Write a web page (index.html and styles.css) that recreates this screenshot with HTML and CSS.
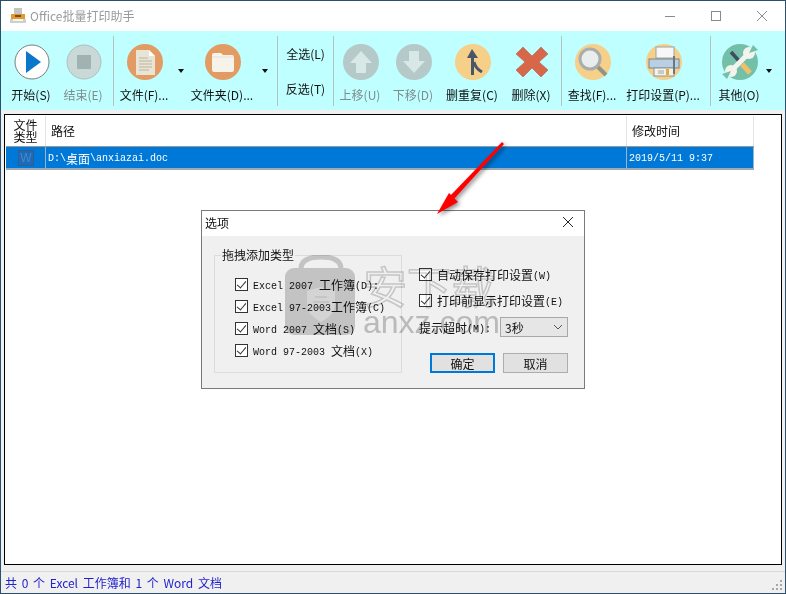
FILE: index.html
```html
<!DOCTYPE html>
<html lang="zh-CN">
<head>
    <meta charset="UTF-8">
    <title>Office批量打印助手</title>
    <link rel="stylesheet" href="styles.css">
</head>
<body>
<div class="window">

    <!-- Title bar -->
    <header class="titlebar">
        <svg class="app-icon" width="16" height="16" viewBox="0 0 16 16">
            <rect x="4" y="0" width="8" height="6" fill="#c4c4c4"/>
            <rect x="1" y="6" width="14" height="5" fill="#e09a2e"/>
            <rect x="5" y="7" width="6" height="2" fill="#7a4a1a"/>
            <rect x="0" y="11" width="16" height="4" fill="#cfcfcf"/>
            <rect x="3" y="11" width="10" height="2" fill="#f4f4f4"/>
        </svg>
        <span class="app-title">Office批量打印助手</span>
        <div class="win-controls">
            <svg width="12" height="12" viewBox="0 0 12 12"><path d="M1 6.5h10" stroke="#8a8a8a" fill="none"/></svg>
            <svg width="12" height="12" viewBox="0 0 12 12"><rect x="1.5" y="1.5" width="9" height="9" stroke="#8a8a8a" fill="none"/></svg>
            <svg width="12" height="12" viewBox="0 0 12 12"><path d="M1 1l10 10M11 1L1 11" stroke="#8a8a8a" fill="none"/></svg>
        </div>
    </header>

    <!-- Toolbar -->
    <div class="toolbar">
        <div class="group g-run">
            <div class="tool w-48">
                <svg class="icon" viewBox="0 0 36 36"><circle cx="18" cy="18" r="17" fill="#fff" stroke="#7c7c7c"/><path d="M12 7l15 11-15 11z" fill="#0a76cc"/></svg>
                <span>开始(S)</span>
            </div>
            <div class="tool w-56 off">
                <svg class="icon" viewBox="0 0 36 36"><circle cx="18" cy="18" r="17" fill="#c9d9d8" stroke="#b0bebd"/><rect x="11" y="11" width="14" height="14" fill="#a0b2b1"/></svg>
                <span>结束(E)</span>
            </div>
        </div>
        <div class="group g-files">
            <div class="tool w-62">
                <svg class="icon" viewBox="0 0 36 36"><circle cx="18" cy="18" r="18" fill="#e29c63"/><path d="M9 6h13l6 6v19H9z" fill="#e8e5d6"/><path d="M22 6l6 6h-6z" fill="#fff"/><path d="M12 14h9M12 17h13M12 20h13M12 23h13M12 26h10" stroke="#b9b59f"/></svg>
                <span>文件(F)...</span>
            </div>
            <i class="caret c-file"></i>
            <div class="tool w-72">
                <svg class="icon" viewBox="0 0 36 36"><circle cx="18" cy="18" r="18" fill="#e29c63"/><path d="M7 11q0-2 2-2h7l2 2h9q2 0 2 2v13q0 2-2 2H9q-2 0-2-2z" fill="#f6f3ea"/><path d="M7 13h22" stroke="#e6e0cf"/></svg>
                <span>文件夹(D)...</span>
            </div>
            <i class="caret c-folder"></i>
        </div>
        <div class="group g-select">
            <span>全选(L)</span>
            <span>反选(T)</span>
        </div>
        <div class="group g-edit">
            <div class="tool w-54 off">
                <svg class="icon" viewBox="0 0 36 36"><circle cx="18" cy="18" r="18" fill="#b5c9c8"/><path d="M18 7l11 12h-6v10H13V19H7z" fill="#d7e8e6"/></svg>
                <span>上移(U)</span>
            </div>
            <div class="tool w-52 off">
                <svg class="icon" viewBox="0 0 36 36"><circle cx="18" cy="18" r="18" fill="#b5c9c8"/><path d="M18 29L7 17h6V7h10v10h6z" fill="#d7e8e6"/></svg>
                <span>下移(D)</span>
            </div>
            <div class="tool w-66">
                <svg class="icon" viewBox="0 0 36 36"><circle cx="18" cy="18" r="18" fill="#f6cf88"/><path d="M17 5l6 9h-4v17h-3V14h-4z" fill="#47566c"/><path d="M19 18q1 6 8 10" stroke="#47566c" stroke-width="3" fill="none"/></svg>
                <span>删重复(C)</span>
            </div>
            <div class="tool w-52">
                <svg class="icon" viewBox="0 0 36 36"><path d="M9 3l9 9 9-9 7 7-9 8 9 8-7 7-9-9-9 9-7-7 9-8-9-8z" fill="#d8674a" stroke="#a9553f" stroke-width="0.5"/></svg>
                <span>删除(X)</span>
            </div>
        </div>
        <div class="group g-find">
            <div class="tool w-62">
                <svg class="icon" viewBox="0 0 36 36"><circle cx="18" cy="18" r="18" fill="#f6cf88"/><circle cx="15" cy="15" r="10" fill="#e9edee" stroke="#a9adab" stroke-width="3"/><path d="M23 23l8 8" stroke="#8f9488" stroke-width="4"/></svg>
                <span>查找(F)...</span>
            </div>
            <div class="tool w-80">
                <svg class="icon" viewBox="0 0 36 36">
                    <circle cx="18" cy="18" r="18" fill="#f6cf88"/>
                    <rect x="10" y="3" width="18" height="11" fill="#f7f7f7" stroke="#9aa4ac"/>
                    <rect x="3" y="15" width="30" height="9" fill="#b9cfe4" stroke="#79848c"/>
                    <rect x="8" y="24" width="20" height="8" fill="#f4f1e6" stroke="#8a96a0"/>
                    <path d="M12 27h6M12 29h6" stroke="#9aa4ac"/>
                    <rect x="20" y="25" width="3" height="6" fill="#e6a93c"/>
                    <path d="M28 12v18" stroke="#6b7780" stroke-width="2"/>
                </svg>
                <span>打印设置(P)...</span>
            </div>
        </div>
        <div class="group g-other">
            <div class="tool w-52">
                <svg class="icon" viewBox="0 0 36 36">
                    <circle cx="18" cy="18" r="18" fill="#74bfa8"/>
                    <path d="M20 20l8 9" stroke="#f0c069" stroke-width="5"/>
                    <path d="M9 8l9 10" stroke="#3f4d5c" stroke-width="3.500"/>
                    <path d="M9 27l18-18" stroke="#f4f4ee" stroke-width="5"/>
                    <circle cx="27" cy="9" r="6" fill="#f4f4ee"/>
                    <circle cx="9" cy="27" r="6" fill="#f4f4ee"/>
                    <path d="M27 9l4-8 5 5z" fill="#74bfa8"/>
                    <path d="M9 27l-4 8-5-5z" fill="#74bfa8"/>
                </svg>
                <span>其他(O)</span>
            </div>
            <i class="caret c-other"></i>
        </div>
    </div>

    <!-- File list -->
    <div class="content">
        <div class="list">
            <div class="list-row list-head">
                <div class="cell cell-type">文件<br>类型</div>
                <div class="cell cell-path">路径</div>
                <div class="cell cell-time">修改时间</div>
            </div>
            <div class="list-row list-sel">
                <div class="cell cell-type">
                    <svg width="16" height="16" viewBox="0 0 16 16"><rect x="0.500" y="0.500" width="15" height="15" fill="#1f6ab4" stroke="#2a5f98"/><text x="8" y="12" class="word-w">W</text></svg>
                </div>
                <div class="cell cell-path"><span class="en">D:\</span>桌面<span class="en">\anxiazai.doc</span></div>
                <div class="cell cell-time"><span class="en">2019/5/11 9:37</span></div>
            </div>
        </div>
    </div>

    <!-- Status bar -->
    <footer class="statusbar">
        <span class="status-text">共 0 个 Excel 工作簿和 1 个 Word 文档</span>
        <svg class="grip" width="11" height="11" viewBox="0 0 11 11" fill="#a8a8a8">
            <rect x="8" y="0" width="2" height="2"/><rect x="4" y="4" width="2" height="2"/><rect x="8" y="4" width="2" height="2"/>
            <rect x="0" y="8" width="2" height="2"/><rect x="4" y="8" width="2" height="2"/><rect x="8" y="8" width="2" height="2"/>
        </svg>
    </footer>

    <!-- Options dialog -->
    <div class="dialog">
        <div class="dialog-title">
            <span>选项</span>
            <svg width="12" height="12" viewBox="0 0 12 12"><path d="M1 1l10 10M11 1L1 11" stroke="#222" fill="none"/></svg>
        </div>
        <div class="dialog-body">
            <fieldset class="types">
                <legend>拖拽添加类型</legend>
                <label class="check"><i class="box"></i><span><span class="en">Excel 2007 </span>工作簿<span class="en">(D):</span></span></label>
                <label class="check"><i class="box"></i><span><span class="en">Excel 97-2003</span>工作簿<span class="en">(C)</span></span></label>
                <label class="check"><i class="box"></i><span><span class="en">Word 2007 </span>文档<span class="en">(S)</span></span></label>
                <label class="check"><i class="box"></i><span><span class="en">Word 97-2003 </span>文档<span class="en">(X)</span></span></label>
            </fieldset>
            <div class="side">
                <label class="check"><i class="box"></i><span>自动保存打印设置<span class="en">(W)</span></span></label>
                <label class="check"><i class="box"></i><span>打印前显示打印设置<span class="en">(E)</span></span></label>
                <div class="timeout">
                    <span>提示超时<span class="en">(M):</span></span>
                    <div class="select">3秒
                        <svg width="10" height="6" viewBox="0 0 10 6"><path d="M1 1l4 4 4-4" stroke="#555" fill="none"/></svg>
                    </div>
                </div>
                <div class="actions">
                    <button class="btn btn-default">确定</button>
                    <button class="btn">取消</button>
                </div>
            </div>
        </div>
    </div>

    <!-- Red arrow annotation -->
    <svg class="arrow" width="80" height="90" viewBox="0 0 80 90">
        <path d="M72 9l2 2-50 55-4-3z" fill="#ff0000"/>
        <path d="M7 81l12-21 9 9z" fill="#ff0000"/>
    </svg>

    <!-- Watermark -->
    <div class="watermark">
        <svg width="70" height="80" viewBox="0 0 70 80">
            <path d="M16 16V14Q16 2 36 2T56 14v2" fill="none" stroke="#cfcfcf" stroke-width="5"/>
            <rect x="0" y="13" width="70" height="67" rx="9" fill="#cfcfcf"/>
            <path d="M36 32l14 4v14q0 10-14 17-14-7-14-17V36z" fill="#e2e2e2"/>
            <path d="M30 42h12M28 47h16M31 52h10" stroke="#d2d2d2" stroke-width="2"/>
        </svg>
        <div class="wm-text">
            <span class="wm-cn">安下载</span>
            <span class="wm-en">anxz.com</span>
        </div>
    </div>
</div>
</body>
</html>
```

FILE: styles.css
```css
/* Reset and Basic Styles */
* {
    margin: 0;
    padding: 0;
    box-sizing: border-box;
}
body {
    font-family: "Noto Sans CJK SC", "Noto Sans", sans-serif;
    font-size: 12px;
    background-color: #f0f0f0;
    color: #111;
    overflow: hidden;
}
.window {
    position: relative;
    width: 786px;
    height: 594px;
    display: flex;
    flex-direction: column;
    background-color: #f0f0f0;
    border: 1px solid #2d4f6e;
}
.en {
    font-family: "Liberation Mono", monospace;
    font-size: 10px;
    white-space: pre;
}

/* Title bar */
.titlebar {
    height: 30px;
    flex: none;
    display: flex;
    align-items: center;
    background-color: #fff;
    padding-left: 9px;
}
.app-icon {
    margin-right: 4px;
}
.app-title {
    color: #9a9a9a;
    line-height: 16px;
}
.win-controls {
    margin-left: auto;
    display: flex;
    gap: 34px;
    padding-right: 17px;
}

/* Toolbar */
.toolbar {
    height: 79px;
    flex: none;
    display: flex;
    background-color: #bfffff;
}
.group {
    display: flex;
    height: 70px;
    margin-top: 5px;
    border-right: 1px solid #b4c2c2;
}
.g-run { width: 113px; padding-left: 7px; }
.g-files { width: 164px; }
.g-select { width: 56px; flex-direction: column; align-items: center; justify-content: space-between; padding: 9px 0 9px; }
.g-edit { width: 228px; }
.g-find { width: 149px; }
.g-other { border-right: none; padding-left: 3px; }
.tool {
    display: flex;
    flex-direction: column;
    align-items: center;
    padding-top: 8px;
    white-space: nowrap;
}
.tool span {
    margin-top: 7px;
    margin-right: 2px;
    line-height: 16px;
}
.tool.off span {
    color: #7f8c8c;
}
.icon {
    width: 36px;
    height: 36px;
    flex: none;
}
.w-48 { width: 48px; }
.w-52 { width: 52px; }
.w-54 { width: 54px; }
.w-56 { width: 56px; }
.w-62 { width: 62px; }
.w-66 { width: 66px; }
.w-72 { width: 72px; }
.w-80 { width: 80px; }
.caret {
    flex: none;
    width: 0;
    height: 0;
    margin-top: 33px;
    border-left: 3.500px solid transparent;
    border-right: 3.500px solid transparent;
    border-top: 4px solid #111;
}
.c-file { margin-left: 2px; margin-right: 3px; }
.c-folder { margin-left: 3px; }

/* File list */
.content {
    flex: 1;
    padding: 4px 3px 6px;
    display: flex;
}
.list {
    flex: 1;
    background-color: #fff;
    border: 1px solid #000;
    padding: 1px 0 0 1px;
}
.list-row {
    width: 748px;
    display: grid;
    grid-template-columns: 40px 581px 127px;
}
.cell {
    border-right: 1px solid #e4e4e4;
    display: flex;
    align-items: center;
}
.list-head {
    height: 31px;
    border-bottom: 1px solid #999;
    line-height: 12px;
}
.list-head .cell-type { justify-content: center; text-align: center; }
.list-head .cell-path { padding-left: 5px; }
.list-head .cell-time { padding-left: 5px; }
.list-sel {
    height: 23px;
    background-color: #0078d7;
    color: #fff;
    border-bottom: 2px solid #9aa9b5;
}
.list-sel .cell { border-right-color: #9ab4c9; }
.list-sel .cell-type { justify-content: center; }
.list-sel .cell-path { padding: 1px 0 0 2px; }
.list-sel .cell-time { padding: 1px 0 0 2px; }
.word-w {
    font-family: "Liberation Sans", sans-serif;
    font-size: 12px;
    text-anchor: middle;
    fill: #3f8ad0;
}

/* Status bar */
.statusbar {
    height: 22px;
    flex: none;
    display: flex;
    align-items: center;
    justify-content: space-between;
    border-top: 1px solid #d9d9d9;
    padding: 0 2px 0 4px;
    color: #2222cc;
}
.status-text {
    word-spacing: 2px;
}
.grip {
    align-self: flex-end;
    margin-bottom: 2px;
}

/* Options dialog */
.dialog {
    position: absolute;
    left: 200px;
    top: 209px;
    width: 384px;
    height: 179px;
    background-color: #f0f0f0;
    border: 1px solid #7a7a7a;
    display: flex;
    flex-direction: column;
}
.dialog-title {
    height: 25px;
    flex: none;
    background-color: #fff;
    display: flex;
    align-items: center;
    justify-content: space-between;
    padding: 0 10px 3px 3px;
}
.dialog-body {
    flex: 1;
    display: flex;
    padding: 11px 16px 0 12px;
}
.types {
    width: 188px;
    height: 126px;
    border: 1px solid #dcdcdc;
    padding: 13px 0 0 20px;
    display: flex;
    flex-direction: column;
    gap: 6px;
}
.types legend {
    margin-left: -14px;
    padding: 0 1px;
    line-height: 16px;
}
.check {
    display: flex;
    align-items: center;
    gap: 5px;
    height: 16px;
    white-space: nowrap;
}
.check .en,
.timeout .en {
    vertical-align: 1px;
}
.box {
    position: relative;
    flex: none;
    width: 13px;
    height: 13px;
    border: 1px solid #333;
    background-color: #fff;
}
.box::after {
    content: '';
    position: absolute;
    left: 3px;
    top: 0;
    width: 4px;
    height: 8px;
    border-right: 1px solid #333;
    border-bottom: 1px solid #333;
    transform: rotate(40deg);
}
.side {
    margin-left: 17px;
    padding-top: 19px;
    flex: 1;
    display: flex;
    flex-direction: column;
    gap: 10px;
}
.timeout {
    display: flex;
    align-items: center;
    justify-content: space-between;
    height: 20px;
    margin-top: -1px;
}
.select {
    width: 68px;
    height: 20px;
    border: 1px solid #a8a8a8;
    background-color: #e6e6e6;
    display: flex;
    align-items: center;
    justify-content: space-between;
    padding: 0 4px;
}
.actions {
    display: flex;
    justify-content: flex-end;
    gap: 8px;
    margin-top: 6px;
}
.btn {
    width: 65px;
    height: 20px;
    border: 1px solid #adadad;
    background-color: #e1e1e1;
    font-family: inherit;
    font-size: 12px;
    color: #111;
}
.btn-default {
    border: 2px solid #0078d7;
}

/* Annotation and watermark lie over the window */
.arrow {
    position: absolute;
    left: 429px;
    top: 132px;
    filter: drop-shadow(2px 2px 2px rgba(0, 0, 0, 0.45));
}
.watermark {
    position: absolute;
    left: 284px;
    top: 254px;
    display: flex;
    gap: 8px;
    mix-blend-mode: multiply;
    pointer-events: none;
}
.wm-text {
    display: flex;
    flex-direction: column;
    margin-top: 9px;
    line-height: 1;
}
.wm-cn {
    font-size: 44px;
    line-height: 42px;
    color: transparent;
    -webkit-text-stroke: 1.5px #d2d2d2;
}
.wm-en {
    font-family: "Liberation Sans", sans-serif;
    font-size: 32px;
    color: #c6c6c6;
}
```
